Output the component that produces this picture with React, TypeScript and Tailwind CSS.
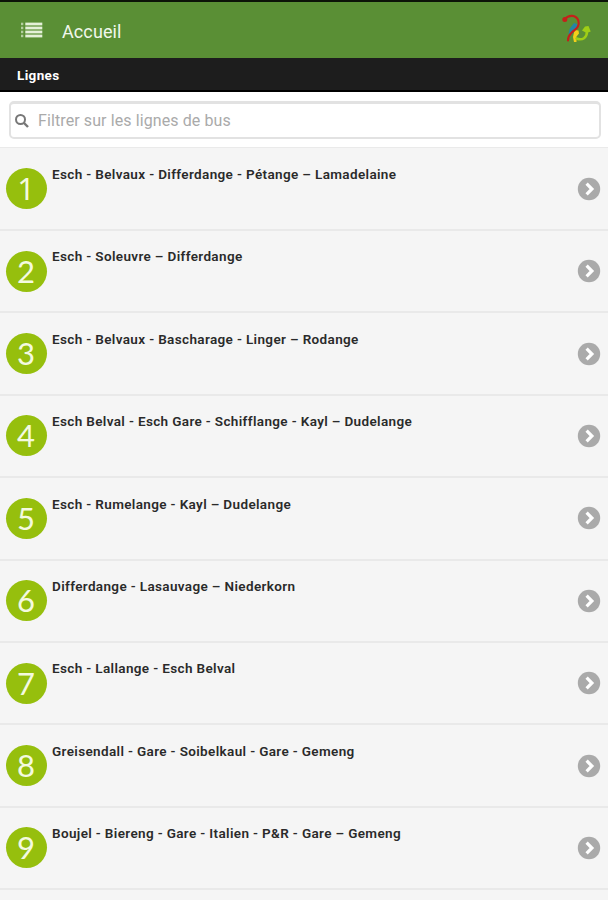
import clsx from 'clsx';

const lines = [
  { id: 1, name: 'Esch - Belvaux - Differdange - Pétange – Lamadelaine' },
  { id: 2, name: 'Esch - Soleuvre – Differdange' },
  { id: 3, name: 'Esch - Belvaux - Bascharage - Linger – Rodange' },
  { id: 4, name: 'Esch Belval - Esch Gare - Schifflange - Kayl – Dudelange' },
  { id: 5, name: 'Esch - Rumelange - Kayl – Dudelange' },
  { id: 6, name: 'Differdange - Lasauvage – Niederkorn' },
  { id: 7, name: 'Esch - Lallange - Esch Belval' },
  { id: 8, name: 'Greisendall - Gare - Soibelkaul - Gare - Gemeng' },
  { id: 9, name: 'Boujel - Biereng - Gare - Italien - P&R - Gare – Gemeng' },
];

function MenuIcon() {
  return (
    <svg width="22" height="16" viewBox="0 0 22 16" fill="#e4f0d8">
      {[0, 4, 8, 12].map((y) => (
        <g key={y}>
          <rect x="0" y={y + 0.7} width="2.3" height="2.5" opacity="0.65" />
          <rect x="4.3" y={y + 0.6} width="17" height="2.8" />
        </g>
      ))}
    </svg>
  );
}

function Logo() {
  return (
    <svg width="30" height="32" viewBox="0 0 30 32" fill="none" strokeLinecap="round">
      <path d="M12 9l3 1 .5 4-3.5 4-4 4-1.5-2 1-5z" fill="#2385a5" />
      <path d="M12.5 16l4 .5.5 3-2.500 3V28H12l-1-5z" fill="#f4cf1b" />
      <path d="M2.5 5.3C7 .3 14 .8 16.300 6.500c2 6.500-3 8.500-7 12.500-2.500 2.500-3.500 5-3.300 7.500" stroke="#c5201a" strokeWidth="2.1" />
      <circle cx="2.8" cy="5.6" r="2.5" fill="#c5201a" />
      <path d="M14.5 24.5c6 2.500 10.500-1 10.500-7" stroke="#9fce16" strokeWidth="2.5" />
      <path d="M20 16.5l3-4 3.500-.5 2.200 5.500-4 1.500z" fill="#9fce16" />
    </svg>
  );
}

function SearchIcon() {
  return (
    <svg width="16" height="16" viewBox="0 0 16 16" fill="none" stroke="#777" strokeWidth="2">
      <circle cx="6.5" cy="6.5" r="4.5" />
      <path d="M10 10l4 4" strokeWidth="2.4" />
    </svg>
  );
}

function Chevron() {
  return (
    <svg className="shrink-0" width="24" height="24" viewBox="0 0 24 24" fill="none">
      <circle cx="12" cy="12" r="11.2" fill="#aaa" />
      <path d="M9.6 6.7l5.3 5.3-5.3 5.3" stroke="#fff" strokeWidth="3.2" />
    </svg>
  );
}

export default function App() {
  return (
    <div className="flex h-[900px] w-[608px] flex-col overflow-hidden bg-[#f5f5f5] font-[Roboto,sans-serif]">
      <header className="flex h-[58px] shrink-0 items-center border-t-2 border-[#0c1408] bg-[#5a8f35] pr-[16px] pl-[21px]">
        <MenuIcon />
        <h1 className="mt-[2px] ml-[19px] text-[18px] tracking-[0.1px] text-[#f1f7ec]">Accueil</h1>
        <div className="ml-auto">
          <Logo />
        </div>
      </header>

      <div className="flex h-[34px] shrink-0 items-center border-b-2 border-black bg-[#1d1d1d] pt-[2px] pl-[17px]">
        <h2 className="text-[13.5px] font-bold tracking-[0.36px] text-white">Lignes</h2>
      </div>

      <div className="h-[55px] shrink-0 bg-white pt-[9px] pr-[7px] pl-[9px]">
        <label className="flex h-[38px] items-center rounded-[5px] border-2 border-t-[3px] border-[#e2e2e2] pl-[3px]">
          <SearchIcon />
          <input
            type="text"
            placeholder="Filtrer sur les lignes de bus"
            className="ml-2 flex-1 text-[16px] tracking-[0.1px] outline-none placeholder:text-[#aaa]"
          />
        </label>
      </div>

      <ul className="shrink-0 border-t border-[#eaeaea] pt-[0.6px]">
        {lines.map((line) => (
          <li key={line.id} className="flex h-[82.4px] items-center border-b-2 border-[#e9e9e9] pr-[7px] pl-[6px]">
            <span
              className={clsx(
                'flex size-[41px] shrink-0 items-center justify-center rounded-full bg-[#96bf0d] pr-px text-[31px] leading-none text-[#f4fae0]',
                // Lato's "1" has a foot, the badge uses a plain one
                line.id === 1 ? 'font-["Noto_Sans",sans-serif]' : 'font-[Lato,sans-serif]',
              )}
            >
              {line.id}
            </span>
            <span className="ml-[5px] flex-1 self-start pt-[15.5px] text-[13.5px] leading-5 font-semibold tracking-[0.36px] text-[#2a2a2a]">
              {line.name}
            </span>
            <Chevron />
          </li>
        ))}
      </ul>
    </div>
  );
}
